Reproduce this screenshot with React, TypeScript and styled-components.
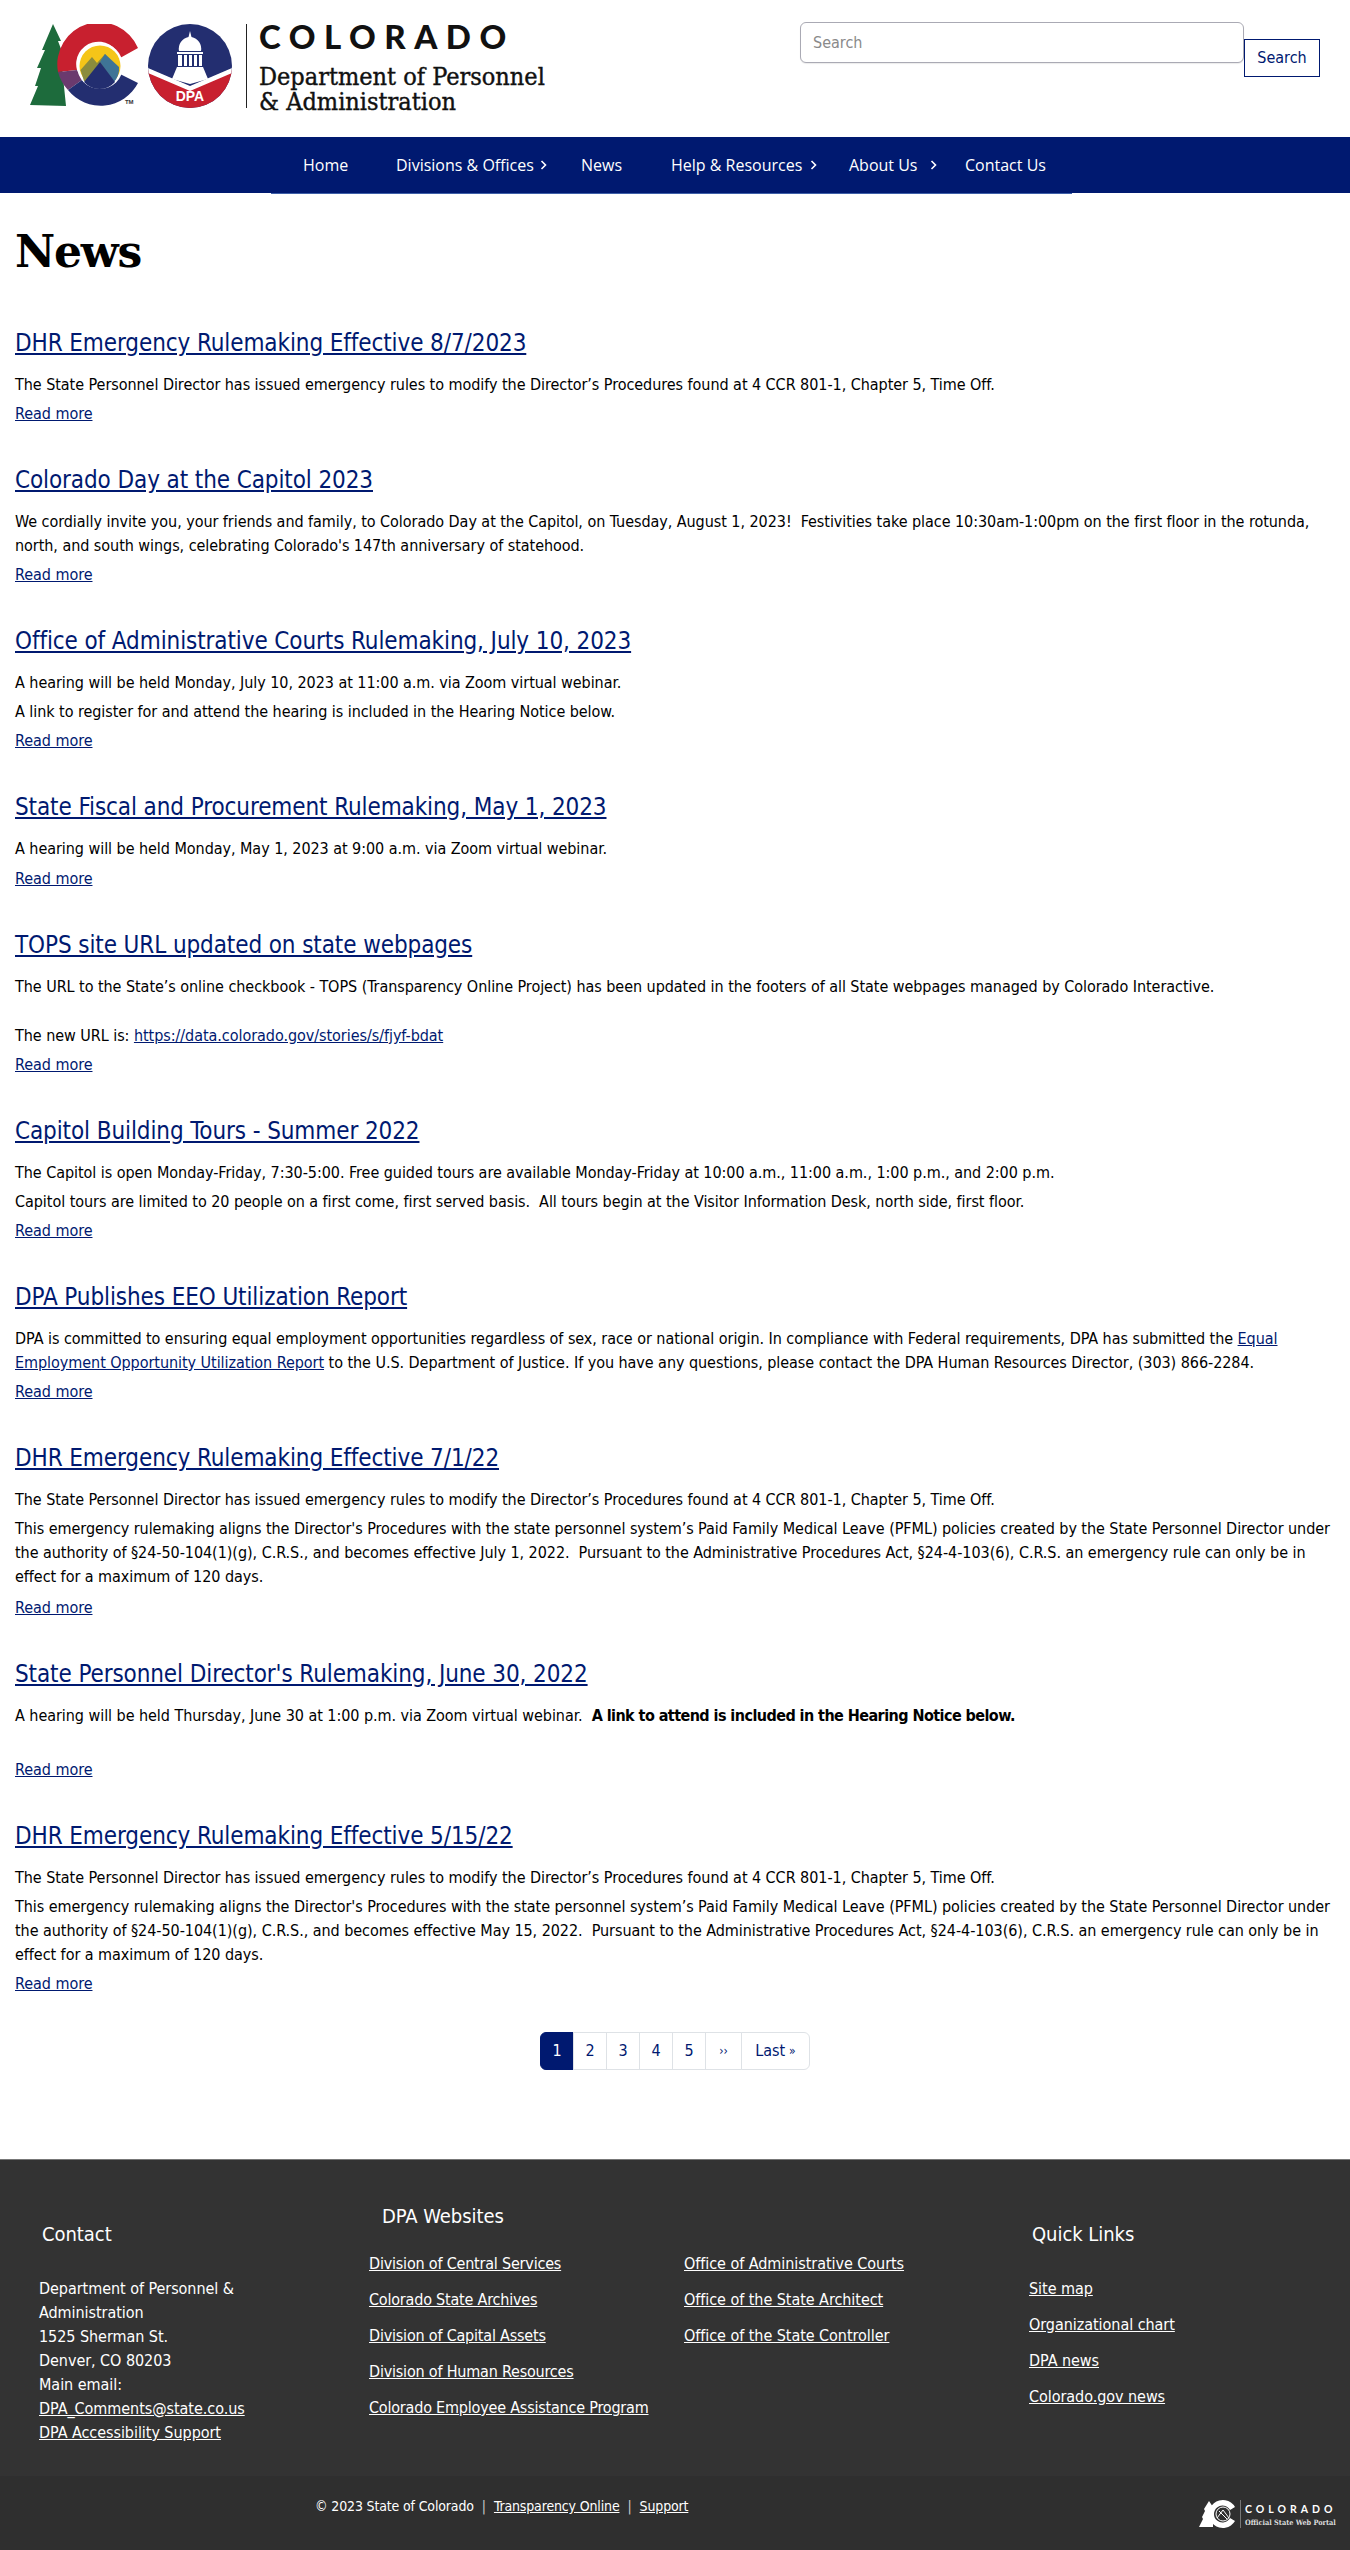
import React from "react";
import styled, { createGlobalStyle } from "styled-components";

const NAVY = "#001970";

const Global = createGlobalStyle`
  html, body { margin: 0; padding: 0; background: #fff; }
  body { font-family: "DejaVu Sans Condensed", "DejaVu Sans", sans-serif; font-size: 16px; line-height: 24px; color: #000; letter-spacing: -0.05px; }
  * { box-sizing: border-box; }
`;

const Page = styled.div`width: 1350px; height: 2550px; overflow: hidden;`;

const Header = styled.header`
  height: 137px;
  display: flex;
  justify-content: space-between;
  align-items: flex-start;
`;
const Brand = styled.div`
  display: flex;
  align-items: stretch;
  margin: 24px 0 0 30px;
`;
const LogoMark = styled.svg`width: 210px; height: 84px; display: block;`;
const Rule = styled.div`width: 1px; height: 84px; background: #222; margin: 0 13px 0 6px;`;
const Wordmark = styled.div`display: flex; flex-direction: column; margin-left: -1px;`;
const StateName = styled.div`
  font-family: "Lato", sans-serif;
  font-weight: 900;
  font-size: 33px;
  line-height: 24px;
  letter-spacing: 8.5px;
  color: #111;
`;
const DeptName = styled.div`
  font-family: "DejaVu Serif Condensed", "DejaVu Serif", serif;
  font-weight: 400;
  font-size: 25px;
  line-height: 25px;
  letter-spacing: 0;
  margin-top: 16px;
  color: #111;
  -webkit-text-stroke: 0.4px #111;
`;
const SearchForm = styled.form`
  display: flex;
  align-items: flex-start;
  margin: 22px 30px 0 0;
`;
const SearchInput = styled.input`
  width: 444px;
  height: 41px;
  padding: 0 12px;
  border: 1px solid #aaaab4;
  border-radius: 6px;
  font: inherit;
  box-shadow: 0 1px 1px rgba(0,0,0,.08);
  &::placeholder { color: #8a8a8a; opacity: 1; }
`;
const SearchButton = styled.button`
  width: 76px;
  height: 38px;
  margin-top: 17px;
  border: 1px solid ${NAVY};
  background: #fff;
  color: ${NAVY};
  font: inherit;
  padding: 0;
`;

const NavBar = styled.nav`
  height: 56px;
  background: ${NAVY};
  padding-left: 271px;
`;
const NavList = styled.ul`
  width: 801px;
  height: 57px;
  margin: 0;
  padding: 0;
  list-style: none;
  border-bottom: 1px solid #3e5fa8;
  display: flex;
  align-items: flex-start;
`;
const NavItem = styled.li<{ $w: number; $pad: number }>`
  width: ${(p) => p.$w}px;
  padding-left: ${(p) => p.$pad}px;
  height: 56px;
  display: flex;
  align-items: center;
  color: #fff;
  white-space: nowrap;
  font-family: "Open Sans", sans-serif;
  font-size: 16px;
  letter-spacing: 0;
`;
const Chevron = styled.svg<{ $gap: number }>`
  width: 7px;
  height: 10px;
  flex-shrink: 0;
  margin-left: ${(p) => p.$gap}px;
`;

const Main = styled.main`padding: 0 15px;`;
const PageTitle = styled.h1`
  margin: 29px 0 0;
  font-family: "DejaVu Serif", serif;
  font-weight: 700;
  font-size: 44px;
  line-height: 60px;
  height: 60px;
  letter-spacing: -1.2px;
`;
const Article = styled.article`
  padding-bottom: 39px;
  &:first-of-type { margin-top: 46px; }
`;
const ArticleTitle = styled.h2`
  margin: 0 0 15px;
  font-weight: 400;
  font-size: 24px;
  line-height: 30px;
  letter-spacing: -0.1px;
  a { color: ${NAVY}; }
`;
const Para = styled.p<{ $gap?: number }>`
  margin: 0 0 ${(p) => p.$gap ?? 5}px;
  a { color: ${NAVY}; }
`;
const Strong = styled.b`
  letter-spacing: -0.56px;
`;
const ReadMore = styled.a`
  display: block;
  color: ${NAVY};
  text-decoration: underline;
  line-height: 24px;
  margin-top: 1px;
`;

const Pager = styled.ul`
  list-style: none;
  margin: -3px 0 0;
  padding: 0;
  display: flex;
  justify-content: center;
`;
const PageCell = styled.li<{ $w: number; $active?: boolean }>`
  width: ${(p) => p.$w}px;
  height: 38px;
  display: flex;
  align-items: center;
  justify-content: center;
  gap: 4px;
  margin-left: -1px;
  border: 1px solid #dee2e6;
  background: ${(p) => (p.$active ? NAVY : "#fff")};
  border-color: ${(p) => (p.$active ? NAVY : "#dee2e6")};
  color: ${(p) => (p.$active ? "#fff" : NAVY)};
  &:first-child { border-radius: 6px 0 0 6px; margin-left: 0; }
  &:last-child { border-radius: 0 6px 6px 0; }
`;
const SmallMark = styled.span`font-size: 12px;`;

const Footer = styled.footer`
  position: absolute;
  left: 0;
  right: 0;
  top: 2159px;
  height: 391px;
  background: #333;
  color: #fff;
  border-top: 1px solid #777;
`;
const FooterTop = styled.div`
  height: 316px;
  display: flex;
`;
const FooterCol = styled.div<{ $w: number; $pad: number }>`
  width: ${(p) => p.$w}px;
  padding-left: ${(p) => p.$pad}px;
`;
const FooterHeading = styled.h3<{ $top: number; $left: number }>`
  margin: ${(p) => p.$top}px 0 0 ${(p) => p.$left}px;
  font-weight: 400;
  font-size: 20px;
  line-height: 28px;
`;
const AddressBlock = styled.div`
  width: 260px;
  margin-top: 29px;
  a { color: #fff; display: block; }
`;
const LinkColumns = styled.div`
  display: flex;
  margin-top: 22px;
`;
const LinkColumn = styled.ul<{ $w: number; $top?: number; $tight?: boolean }>`
  list-style: none;
  margin: ${(p) => p.$top ?? 0}px 0 0;
  padding: 0;
  width: ${(p) => p.$w}px;
  letter-spacing: ${(p) => (p.$tight ? "-0.2px" : "inherit")};
`;
const LinkItem = styled.li`
  height: 36px;
  line-height: 24px;
  a { color: #fff; }
`;
const FooterBottom = styled.div`
  height: 74px;
  background: #2f2f2f;
  display: flex;
  align-items: flex-start;
  padding-left: 315px;
  font-size: 14px;
  letter-spacing: -0.15px;
  position: relative;
  a { color: #fff; }
`;
const Legal = styled.div`margin-top: 18px; line-height: 24px;`;
const Sep = styled.span`margin: 0 8px; color: #ccc;`;
const PortalLogo = styled.svg`
  position: absolute;
  left: 1199px;
  top: 22px;
  width: 140px;
  height: 32px;
`;

const Chev = ({ gap }: { gap: number }) => (
  <Chevron $gap={gap} viewBox="0 0 7 10" aria-hidden="true">
    <path d="M1.5 1 L5.5 5 L1.5 9" fill="none" stroke="#fff" strokeWidth="1.6" />
  </Chevron>
);

const Logo = () => (
  <LogoMark viewBox="0 0 210 84" aria-hidden="true">
    <path d="M23 0 L31 17 L28 17 L34 33 L31 33 L36 82 L0 81 L8 62 L5 62 L11 44 L7 44 L15 26 L12 26 Z" fill="#1d6b3c" />
    <path d="M108 24 A42 42 0 0 0 28 48 L47 46 A22 22 0 0 1 90 34 Z" fill="#c8202f" />
    <path d="M28 48 A42 42 0 0 0 38 66 L52 56 L47 46 Z" fill="#6b3a6e" />
    <path d="M38 66 A42 42 0 0 0 108 59 L90 50 A22 22 0 0 1 52 56 Z" fill="#232e70" />
    <circle cx="70" cy="42" r="23" fill="#fff" />
    <circle cx="70" cy="42" r="20.5" fill="#f5c518" />
    <path d="M50.5 46 L62 33 L67 39 L75 30 L89 46 A20.5 20.5 0 0 1 84 57 L54 57 Z" fill="#8b8c3c" />
    <path d="M75 30 L89 43 A20.5 20.5 0 0 1 84 58 L70 38 Z" fill="#3f7496" />
    <path d="M54 58 L70 38 L85 58 A20.5 20.5 0 0 1 54 58 Z" fill="#232e70" />
    <text x="95" y="80" fontSize="6" fontFamily="Liberation Sans, sans-serif" fontWeight="700" fill="#333">TM</text>
    <clipPath id="seal"><circle cx="160" cy="42" r="42" /></clipPath>
    <g clipPath="url(#seal)">
      <rect x="118" y="0" width="84" height="84" fill="#232e70" />
      <path d="M118 46 L160 66 L202 46 V84 H118 Z" fill="#c8202f" />
      <path d="M118 44 L160 62 L202 44 V49 L160 67 L118 49 Z" fill="#fff" />
    </g>
    <path d="M160 7 L161.5 13 A12 12 0 0 1 171 27 H149 A12 12 0 0 1 158.500 13 Z" fill="#fff" />
    <rect x="147" y="28" width="26" height="2" fill="#fff" />
    <path d="M148 31 h4 v11 h-4 Z M154 31 h3 v11 h-3 Z M159 31 h3 v11 h-3 Z M164 31 h3 v11 h-3 Z M169 31 h3 v11 h-3 Z" fill="#fff" />
    <path d="M147 43 H173 L178 55 L160 60 L142 55 Z" fill="#fff" />
    <text x="160" y="77" textAnchor="middle" fontSize="14" fontFamily="Liberation Sans, sans-serif" fontWeight="700" fill="#fff">DPA</text>
  </LogoMark>
);

const Portal = () => (
  <PortalLogo viewBox="0 0 140 32" aria-hidden="true">
    <path d="M10 3 L14 9 L14 29 L0 29 L4 21 L3 19 L6 13 L5 11 Z" fill="#fff" />
    <path d="M36 9 A14 14 0 1 0 36 23 L31 20 A8.500 8.500 0 1 1 31 12 Z" fill="#fff" />
    <circle cx="24" cy="16" r="7" fill="none" stroke="#fff" strokeWidth="1" />
    <path d="M18 20 L24 12 L30 20 M20 13 L28 21" stroke="#fff" strokeWidth="1" fill="none" />
    <rect x="41" y="2" width="1" height="28" fill="#777" />
    <text x="46" y="15" fontSize="10.500" fontWeight="700" letterSpacing="4" fontFamily="Lato, sans-serif" fill="#fff">COLORADO</text>
    <text x="46" y="27" fontSize="7.300" fontWeight="700" letterSpacing="0" fontFamily="DejaVu Serif Condensed, serif" fill="#ddd">Official State Web Portal</text>
  </PortalLogo>
);

const Read = () => <ReadMore href="#">Read more</ReadMore>;
const DIRECTOR = "The State Personnel Director has issued emergency rules to modify the Director’s Procedures found at 4 CCR 801-1, Chapter 5, Time Off.";

export default function App() {
  return (
    <Page>
      <Global />
      <Header>
        <Brand>
          <Logo />
          <Rule />
          <Wordmark>
            <StateName>COLORADO</StateName>
            <DeptName>Department of Personnel<br />&amp; Administration</DeptName>
          </Wordmark>
        </Brand>
        <SearchForm onSubmit={(e) => e.preventDefault()}>
          <SearchInput placeholder="Search" />
          <SearchButton type="button">Search</SearchButton>
        </SearchForm>
      </Header>
      <NavBar>
        <NavList>
          <NavItem $w={125} $pad={32}>Home</NavItem>
          <NavItem $w={185} $pad={0}>Divisions &amp; Offices<Chev gap={6} /></NavItem>
          <NavItem $w={90} $pad={0}>News</NavItem>
          <NavItem $w={178} $pad={0}>Help &amp; Resources<Chev gap={8} /></NavItem>
          <NavItem $w={116} $pad={0}>About Us<Chev gap={12} /></NavItem>
          <NavItem $w={107} $pad={0}>Contact Us</NavItem>
        </NavList>
      </NavBar>
      <Main>
        <PageTitle>News</PageTitle>
        <Article>
          <ArticleTitle><a href="#">DHR Emergency Rulemaking Effective 8/7/2023</a></ArticleTitle>
          <Para>{DIRECTOR}</Para>
          <Read />
        </Article>
        <Article>
          <ArticleTitle><a href="#">Colorado Day at the Capitol 2023</a></ArticleTitle>
          <Para>We cordially invite you, your friends and family, to Colorado Day at the Capitol, on Tuesday, August 1, 2023!&nbsp; Festivities take place 10:30am-1:00pm on the first floor in the rotunda, north, and south wings, celebrating Colorado's 147th anniversary of statehood.</Para>
          <Read />
        </Article>
        <Article>
          <ArticleTitle><a href="#">Office of Administrative Courts Rulemaking, July 10, 2023</a></ArticleTitle>
          <Para>A hearing will be held Monday, July 10, 2023 at 11:00 a.m. via Zoom virtual webinar.</Para>
          <Para>A link to register for and attend the hearing is included in the Hearing Notice below.</Para>
          <Read />
        </Article>
        <Article>
          <ArticleTitle><a href="#">State Fiscal and Procurement Rulemaking, May 1, 2023</a></ArticleTitle>
          <Para $gap={6}>A hearing will be held Monday, May 1, 2023 at 9:00 a.m. via Zoom virtual webinar.</Para>
          <Read />
        </Article>
        <Article>
          <ArticleTitle><a href="#">TOPS site URL updated on state webpages</a></ArticleTitle>
          <Para $gap={25}>The URL to the State’s online checkbook - TOPS (Transparency Online Project) has been updated in the footers of all State webpages managed by Colorado Interactive.</Para>
          <Para>The new URL is: <a href="#">https://data.colorado.gov/stories/s/fjyf-bdat</a></Para>
          <Read />
        </Article>
        <Article>
          <ArticleTitle><a href="#">Capitol Building Tours - Summer 2022</a></ArticleTitle>
          <Para>The Capitol is open Monday-Friday, 7:30-5:00. Free guided tours are available Monday-Friday at 10:00 a.m., 11:00 a.m., 1:00 p.m., and 2:00 p.m.</Para>
          <Para>Capitol tours are limited to 20 people on a first come, first served basis.&nbsp; All tours begin at the Visitor Information Desk, north side, first floor.</Para>
          <Read />
        </Article>
        <Article>
          <ArticleTitle><a href="#">DPA Publishes EEO Utilization Report</a></ArticleTitle>
          <Para>DPA is committed to ensuring equal employment opportunities regardless of sex, race or national origin. In compliance with Federal requirements, DPA has submitted the <a href="#">Equal Employment Opportunity Utilization Report</a> to the U.S. Department of Justice. If you have any questions, please contact the DPA Human Resources Director, (303) 866-2284.</Para>
          <Read />
        </Article>
        <Article>
          <ArticleTitle><a href="#">DHR Emergency Rulemaking Effective 7/1/22</a></ArticleTitle>
          <Para>{DIRECTOR}</Para>
          <Para $gap={7}>This emergency rulemaking aligns the Director's Procedures with the state personnel system’s Paid Family Medical Leave (PFML) policies created by the State Personnel Director under the authority of §24-50-104(1)(g), C.R.S., and becomes effective July 1, 2022.&nbsp; Pursuant to the Administrative Procedures Act, §24-4-103(6), C.R.S. an emergency rule can only be in effect for a maximum of 120 days.</Para>
          <Read />
        </Article>
        <Article>
          <ArticleTitle><a href="#">State Personnel Director's Rulemaking, June 30, 2022</a></ArticleTitle>
          <Para $gap={30}>A hearing will be held Thursday, June 30 at 1:00 p.m. via Zoom virtual webinar.&nbsp; <Strong>A link to attend is included in the Hearing Notice below.</Strong></Para>
          <Read />
        </Article>
        <Article>
          <ArticleTitle><a href="#">DHR Emergency Rulemaking Effective 5/15/22</a></ArticleTitle>
          <Para>{DIRECTOR}</Para>
          <Para>This emergency rulemaking aligns the Director's Procedures with the state personnel system’s Paid Family Medical Leave (PFML) policies created by the State Personnel Director under the authority of §24-50-104(1)(g), C.R.S., and becomes effective May 15, 2022.&nbsp; Pursuant to the Administrative Procedures Act, §24-4-103(6), C.R.S. an emergency rule can only be in effect for a maximum of 120 days.</Para>
          <Read />
        </Article>
        <Pager>
          <PageCell $w={34} $active>1</PageCell>
          <PageCell $w={34}>2</PageCell>
          <PageCell $w={34}>3</PageCell>
          <PageCell $w={34}>4</PageCell>
          <PageCell $w={34}>5</PageCell>
          <PageCell $w={37}><SmallMark>››</SmallMark></PageCell>
          <PageCell $w={69}>Last <SmallMark>»</SmallMark></PageCell>
        </Pager>
      </Main>
      <Footer>
        <FooterTop>
          <FooterCol $w={369} $pad={39}>
            <FooterHeading $top={60} $left={3}>Contact</FooterHeading>
            <AddressBlock>
              Department of Personnel &amp; Administration<br />
              1525 Sherman St.<br />
              Denver, CO 80203<br />
              Main email:<br />
              <a href="#">DPA_Comments@state.co.us</a>
              <a href="#">DPA Accessibility Support</a>
            </AddressBlock>
          </FooterCol>
          <FooterCol $w={660} $pad={0}>
            <FooterHeading $top={42} $left={13}>DPA Websites</FooterHeading>
            <LinkColumns>
              <LinkColumn $w={315} $tight>
                <LinkItem><a href="#">Division of Central Services</a></LinkItem>
                <LinkItem><a href="#">Colorado State Archives</a></LinkItem>
                <LinkItem><a href="#">Division of Capital Assets</a></LinkItem>
                <LinkItem><a href="#">Division of Human Resources</a></LinkItem>
                <LinkItem><a href="#">Colorado Employee Assistance Program</a></LinkItem>
              </LinkColumn>
              <LinkColumn $w={340}>
                <LinkItem><a href="#">Office of Administrative Courts</a></LinkItem>
                <LinkItem><a href="#">Office of the State Architect</a></LinkItem>
                <LinkItem><a href="#">Office of the State Controller</a></LinkItem>
              </LinkColumn>
            </LinkColumns>
          </FooterCol>
          <FooterCol $w={321} $pad={0}>
            <FooterHeading $top={60} $left={3}>Quick Links</FooterHeading>
            <LinkColumn $w={300} $top={29}>
              <LinkItem><a href="#">Site map</a></LinkItem>
              <LinkItem><a href="#">Organizational chart</a></LinkItem>
              <LinkItem><a href="#">DPA news</a></LinkItem>
              <LinkItem><a href="#">Colorado.gov news</a></LinkItem>
            </LinkColumn>
          </FooterCol>
        </FooterTop>
        <FooterBottom>
          <Legal>© 2023 State of Colorado<Sep>|</Sep><a href="#">Transparency Online</a><Sep>|</Sep><a href="#">Support</a></Legal>
          <Portal />
        </FooterBottom>
      </Footer>
    </Page>
  );
}
